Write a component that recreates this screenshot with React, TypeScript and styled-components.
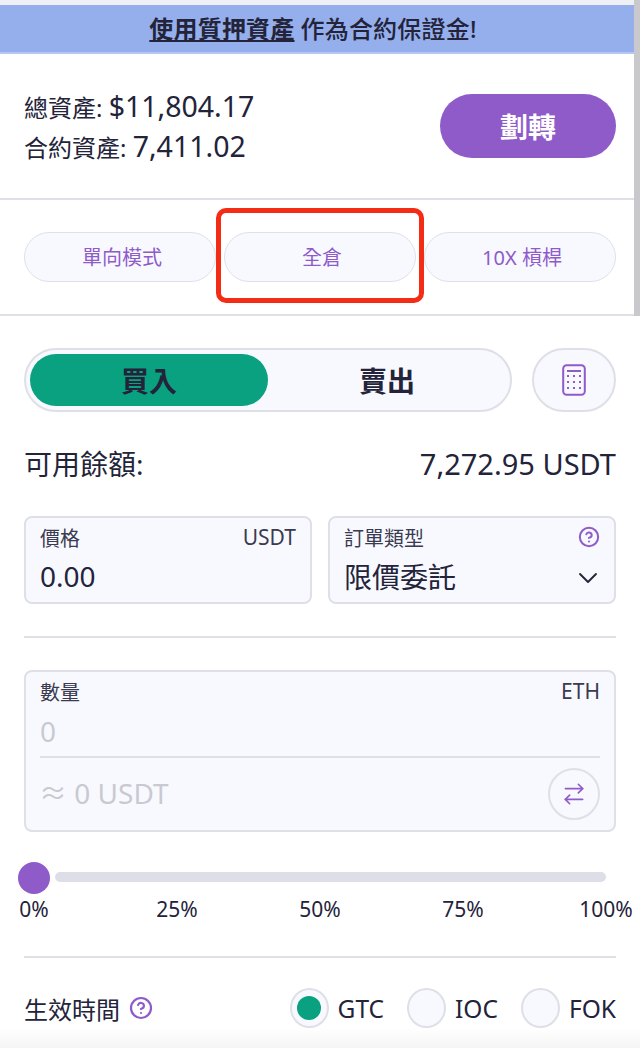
import React from 'react';
import styled, { createGlobalStyle } from 'styled-components';
import { ArrowRightLeft, ChevronDown, CircleHelp } from 'lucide-react';

const GlobalStyle = createGlobalStyle`
  html, body {
    margin: 0;
    padding: 0;
    background: #fff;
    overflow: hidden;
  }
  body {
    font-family: "Noto Sans", "Noto Sans CJK TC", sans-serif;
    color: #23233a;
  }
`;

const Page = styled.div`
  position: relative;
  width: 640px;
  height: 1048px;
  overflow: hidden;
  background: #fff;
`;

const ScrollThumb = styled.div`
  position: absolute;
  top: 0;
  right: 0;
  width: 6px;
  height: 316px;
  background: #c9c9cd;
`;

const BottomFade = styled.div`
  position: absolute;
  left: 0;
  right: 0;
  bottom: 0;
  height: 20px;
  background: linear-gradient(#ffffff00, #f5f5f6);
  pointer-events: none;
`;

const Banner = styled.div`
  height: 54px;
  box-sizing: border-box;
  padding: 0 14px 3px 0;
  background: #95aeec;
  border-top: 5px solid #eef0f6;
  border-bottom: 2px solid #b5c6f1;
  display: flex;
  align-items: center;
  justify-content: center;
  gap: 6px;
  font-size: 24px;
  font-weight: 500;
  color: #23233a;
  letter-spacing: 0.2px;
`;

const BannerLink = styled.span`
  text-decoration: underline;
  font-weight: 700;
`;

const Summary = styled.section`
  height: 146px;
  box-sizing: border-box;
  padding: 0 24px;
  display: flex;
  align-items: center;
  justify-content: space-between;
  border-bottom: 2px solid #dfdfe8;
`;

const Totals = styled.div`
  margin-top: 2px;
  display: flex;
  flex-direction: column;
  gap: 2px;
`;

const TotalLine = styled.div`
  font-size: 24px;
  line-height: 36px;
  white-space: nowrap;
`;

const TotalValue = styled.span`
  font-size: 28.5px;
`;

const TransferButton = styled.button`
  width: 176px;
  height: 64px;
  border: 0;
  border-radius: 32px;
  background: #8e5bc9;
  color: #fff;
  font: inherit;
  font-size: 28px;
  font-weight: 700;
`;

const ChipRow = styled.section`
  height: 116px;
  box-sizing: border-box;
  padding: 32px 24px 0;
  display: grid;
  grid-template-columns: repeat(3, 1fr);
  gap: 8px;
  border-bottom: 2px solid #dfdfe8;
`;

const Chip = styled.div`
  position: relative;
  height: 50px;
  box-sizing: border-box;
  padding: 0 0 2px 4px;
  border: 1px solid #dfe0ea;
  border-radius: 25px;
  background: #f8f9fe;
  color: #8e5bc9;
  font-size: 20px;
  display: flex;
  align-items: center;
  justify-content: center;
`;

const Highlight = styled.div`
  position: absolute;
  left: -9px;
  right: -9px;
  top: -25px;
  bottom: -22px;
  border: 5px solid #f42c16;
  border-radius: 10px;
`;

const Form = styled.section`
  padding: 32px 24px 0;
`;

const SideRow = styled.div`
  display: flex;
  justify-content: space-between;
`;

const SideToggle = styled.div`
  width: 488px;
  height: 64px;
  box-sizing: border-box;
  padding: 4px;
  border: 2px solid #dfdfe8;
  border-radius: 32px;
  background: #f8f9fe;
  display: grid;
  grid-template-columns: 238px 238px;
`;

const SideOption = styled.div<{ $active?: boolean }>`
  border-radius: 26px;
  background: ${(p) => (p.$active ? '#09a180' : 'transparent')};
  color: #23233a;
  font-size: 28px;
  font-weight: 700;
  display: flex;
  align-items: center;
  justify-content: center;
`;

const CalcButton = styled.div`
  width: 84px;
  height: 64px;
  box-sizing: border-box;
  border: 2px solid #dfdfe8;
  border-radius: 32px;
  background: #f8f9fe;
  display: flex;
  align-items: center;
  justify-content: center;
`;

const BalanceRow = styled.div`
  margin-top: 31px;
  height: 40px;
  display: flex;
  align-items: center;
  justify-content: space-between;
  font-size: 29px;
`;

const BalanceLabel = styled.span`
  font-size: 28px;
`;

const FieldRow = styled.div`
  margin-top: 33px;
  display: grid;
  grid-template-columns: 288px 288px;
  gap: 16px;
`;

const Field = styled.div`
  height: 88px;
  box-sizing: border-box;
  padding: 5px 14px 0;
  border: 2px solid #dfdfe8;
  border-radius: 8px;
  background: #f8f9fe;
`;

const FieldHead = styled.div`
  height: 28px;
  display: flex;
  align-items: center;
  justify-content: space-between;
  font-size: 20px;
  color: #3a3a50;
`;

const FieldUnit = styled.span`
  font-size: 21px;
`;

const FieldValue = styled.div`
  margin-top: 5px;
  height: 40px;
  display: flex;
  align-items: center;
  justify-content: space-between;
  font-size: 28px;
`;

const Caret = styled(ChevronDown)`
  margin: 3px -4px 0 0;
  flex: none;
`;

const Rule = styled.div<{ $top: number }>`
  margin-top: ${(p) => p.$top}px;
  height: 2px;
  background: #dfdfe8;
`;

const AmountBox = styled.div`
  margin-top: 32px;
  height: 162px;
  box-sizing: border-box;
  padding: 5px 14px 0;
  border: 2px solid #dfdfe8;
  border-radius: 8px;
  background: #f8f9fe;
`;

const Placeholder = styled.div`
  font-size: 28px;
  color: #c9c9d2;
`;

const AmountInput = styled(Placeholder)`
  margin-top: 5px;
  height: 48px;
  line-height: 42px;
  box-sizing: border-box;
  border-bottom: 2px solid #dfdfe8;
`;

const ConvertRow = styled.div`
  margin-top: 10px;
  display: flex;
  align-items: center;
  justify-content: space-between;
`;

const ConvertHint = styled(Placeholder)`
  margin: 0 0 4px -1px;
`;

const SwapButton = styled.div`
  width: 52px;
  height: 52px;
  box-sizing: border-box;
  border: 2px solid #dfdfe8;
  border-radius: 50%;
  color: #8e5bc9;
  display: flex;
  align-items: center;
  justify-content: center;
`;

const Slider = styled.div`
  margin: 30px 10px 0 -6px;
  display: flex;
  align-items: center;
  gap: 5px;
`;

const Thumb = styled.div`
  width: 32px;
  height: 32px;
  flex: none;
  border-radius: 50%;
  background: #8e5bc9;
`;

const Track = styled.div`
  flex: 1;
  height: 10px;
  margin-top: -2px;
  border-radius: 5px;
  background: #dedee9;
`;

const Ticks = styled.div`
  margin: 1px 10px 0 10px;
  display: flex;
  justify-content: space-between;
`;

const Tick = styled.div`
  width: 0;
  display: flex;
  justify-content: center;
  font-size: 21px;
  line-height: 28px;
  white-space: nowrap;
`;

const ValidityRow = styled.div`
  margin-top: 30px;
  height: 40px;
  display: flex;
  align-items: center;
  justify-content: space-between;
`;

const ValidityLabel = styled.div`
  display: flex;
  align-items: center;
  gap: 9px;
  font-size: 24px;
  color: #8e5bc9;
`;

const LabelText = styled.span`
  color: #23233a;
`;

const RadioGroup = styled.div`
  display: flex;
  gap: 23px;
`;

const RadioOption = styled.div`
  display: flex;
  align-items: center;
  gap: 9px;
  font-size: 24.5px;
`;

const Radio = styled.div<{ $checked?: boolean }>`
  width: 39px;
  height: 40px;
  box-sizing: border-box;
  border: 2px solid #dfdfe8;
  border-radius: 50%;
  background: #f8f9fe;
  display: flex;
  align-items: center;
  justify-content: center;

  &::after {
    content: '';
    display: ${(p) => (p.$checked ? 'block' : 'none')};
    width: 24px;
    height: 24px;
    border-radius: 50%;
    background: #09a180;
  }
`;

const CalculatorIcon = () => (
  <svg width="24" height="32" viewBox="0 0 24 32" fill="none">
    <rect x="1.2" y="1.2" width="21.6" height="29.6" rx="3.5" stroke="#8e5bc9" strokeWidth="2" />
    <path d="M5 7h14" stroke="#8e5bc9" strokeWidth="2" />
    {[12, 18, 24].map((y) =>
      [6, 12, 18].map((x) => <rect key={`${x}-${y}`} x={x - 1} y={y - 1} width="2" height="2" fill="#8e5bc9" />),
    )}
  </svg>
);

const ticks = ['0%', '25%', '50%', '75%', '100%'];

export default function App() {
  return (
    <Page>
      <GlobalStyle />
      <Banner>
        <BannerLink>使用質押資產</BannerLink>
        <span>作為合約保證金!</span>
      </Banner>

      <Summary>
        <Totals>
          <TotalLine>
            總資產: <TotalValue>$11,804.17</TotalValue>
          </TotalLine>
          <TotalLine>
            合約資產: <TotalValue>7,411.02</TotalValue>
          </TotalLine>
        </Totals>
        <TransferButton>劃轉</TransferButton>
      </Summary>

      <ChipRow>
        <Chip>單向模式</Chip>
        <Chip>
          全倉
          <Highlight />
        </Chip>
        <Chip>10X 槓桿</Chip>
      </ChipRow>

      <Form>
        <SideRow>
          <SideToggle>
            <SideOption $active>買入</SideOption>
            <SideOption>賣出</SideOption>
          </SideToggle>
          <CalcButton>
            <CalculatorIcon />
          </CalcButton>
        </SideRow>

        <BalanceRow>
          <BalanceLabel>可用餘額:</BalanceLabel>
          <span>7,272.95 USDT</span>
        </BalanceRow>

        <FieldRow>
          <Field>
            <FieldHead>
              <span>價格</span>
              <FieldUnit>USDT</FieldUnit>
            </FieldHead>
            <FieldValue>0.00</FieldValue>
          </Field>
          <Field>
            <FieldHead>
              <span>訂單類型</span>
              <CircleHelp size={22} color="#8e5bc9" strokeWidth={2.2} />
            </FieldHead>
            <FieldValue>
              <span>限價委託</span>
              <Caret size={32} color="#23233a" strokeWidth={1.4} />
            </FieldValue>
          </Field>
        </FieldRow>

        <Rule $top={32} />

        <AmountBox>
          <FieldHead>
            <span>數量</span>
            <FieldUnit>ETH</FieldUnit>
          </FieldHead>
          <AmountInput>0</AmountInput>
          <ConvertRow>
            <ConvertHint>≈ 0 USDT</ConvertHint>
            <SwapButton>
              <ArrowRightLeft size={26} strokeWidth={1.5} />
            </SwapButton>
          </ConvertRow>
        </AmountBox>

        <Slider>
          <Thumb />
          <Track />
        </Slider>
        <Ticks>
          {ticks.map((t) => (
            <Tick key={t}>{t}</Tick>
          ))}
        </Ticks>

        <Rule $top={33} />

        <ValidityRow>
          <ValidityLabel>
            <LabelText>生效時間</LabelText>
            <CircleHelp size={24} strokeWidth={2.2} />
          </ValidityLabel>
          <RadioGroup>
            <RadioOption>
              <Radio $checked />
              GTC
            </RadioOption>
            <RadioOption>
              <Radio />
              IOC
            </RadioOption>
            <RadioOption>
              <Radio />
              FOK
            </RadioOption>
          </RadioGroup>
        </ValidityRow>
      </Form>

      <ScrollThumb />
      <BottomFade />
    </Page>
  );
}
